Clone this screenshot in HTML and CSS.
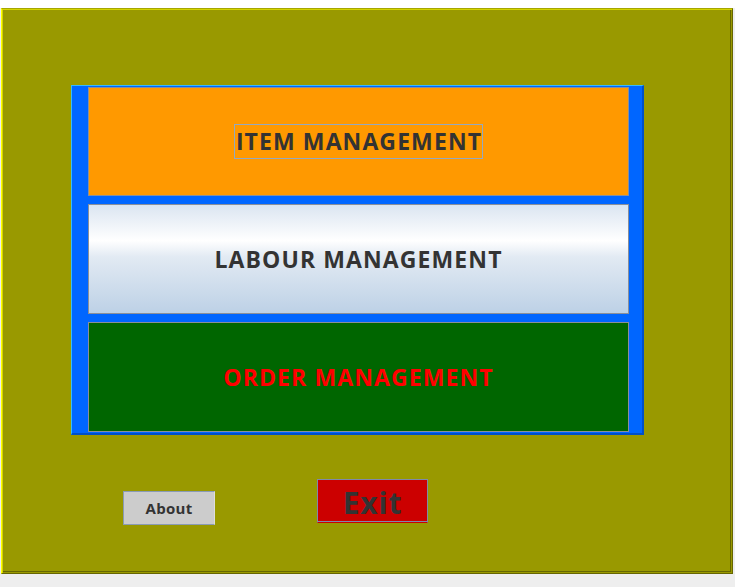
FILE: index.html
```html
<!DOCTYPE html>
<html>
<head>
<meta charset="utf-8">
<link rel="stylesheet" href="styles.css">
</head>
<body>
<div class="topstrip"></div>
<div class="frame">
  <div class="menu">
    <div class="btn btn-item"><span class="focus">ITEM MANAGEMENT</span></div>
    <div class="btn btn-labour">LABOUR MANAGEMENT</div>
    <div class="btn btn-order">ORDER MANAGEMENT</div>
  </div>
  <div class="actions">
    <div class="about">About</div>
    <div class="exit">Exit</div>
  </div>
</div>
</body>
</html>
```
FILE: styles.css
```css
html, body {
  margin: 0;
  padding: 0;
}
body {
  background: #eeeeee;
  width: 735px;
  height: 587px;
  overflow: hidden;
  font-family: "Open Sans", "DejaVu Sans", sans-serif;
}
.topstrip {
  height: 8px;
  background: #ffffff;
}
.frame {
  box-sizing: border-box;
  margin-left: 1px;
  width: 732px;
  height: 566px;
  background: #999900;
  border-top: 1px solid #a6a600;
  border-left: 1px solid #ffff00;
  border-right: 1px solid #666600;
  border-bottom: 1px solid #666600;
  box-shadow: inset 1px 1px 0 #d4d400, inset -1px -1px 0 #999900, inset -2px -2px 0 #666600;
  padding: 76px 0 0 69px;
}
.menu {
  box-sizing: border-box;
  width: 573px;
  height: 350px;
  background: #0066ff;
  border-top: 1px solid #33bbff;
  border-left: 1px solid #33bbff;
  border-right: 2px solid #0050c8;
  border-bottom: 2px solid #0050c8;
  padding: 1px 13px 1px 16px;
  display: flex;
  flex-direction: column;
  gap: 8px;
}
.btn {
  box-sizing: border-box;
  border: 1px solid #8a8f99;
  display: flex;
  align-items: center;
  justify-content: center;
  font-weight: 700;
  font-size: 23px;
  letter-spacing: 1.1px;
  color: #333333;
}
.btn-item {
  height: 109px;
  background: #ff9900;
}
.focus {
  border: 1px solid #93a9c0;
  padding: 0 0 0 1px;
  line-height: 33px;
}
.btn-labour {
  height: 110px;
  background: linear-gradient(to bottom, #dbe5f1 0%, #ffffff 33%, #e2eaf3 48%, #bdd1e6 100%);
}
.btn-order {
  height: 110px;
  background: #006600;
  color: #ff0000;
}
.actions {
  display: flex;
  align-items: flex-start;
  margin-top: 44px;
  margin-left: 52px;
}
.about {
  box-sizing: border-box;
  width: 92px;
  height: 34px;
  margin-top: 12px;
  background: #cccccc;
  border: 1px solid #8a9bb5;
  border-right-color: #dddddd;
  display: flex;
  align-items: center;
  justify-content: center;
  font-weight: 700;
  font-size: 15px;
  letter-spacing: 0.3px;
  color: #333333;
}
.exit {
  box-sizing: border-box;
  width: 111px;
  height: 44px;
  margin-left: 102px;
  background: #cc0000;
  border: 1px solid #7f8aa8;
  border-bottom: 1px solid #cc0000;
  box-shadow: inset 0 -1px 0 #7f8aa8;
  display: flex;
  align-items: center;
  justify-content: center;
  padding-top: 3px;
  font-weight: 700;
  font-size: 30px;
  letter-spacing: 0.8px;
  color: #333333;
}
```
